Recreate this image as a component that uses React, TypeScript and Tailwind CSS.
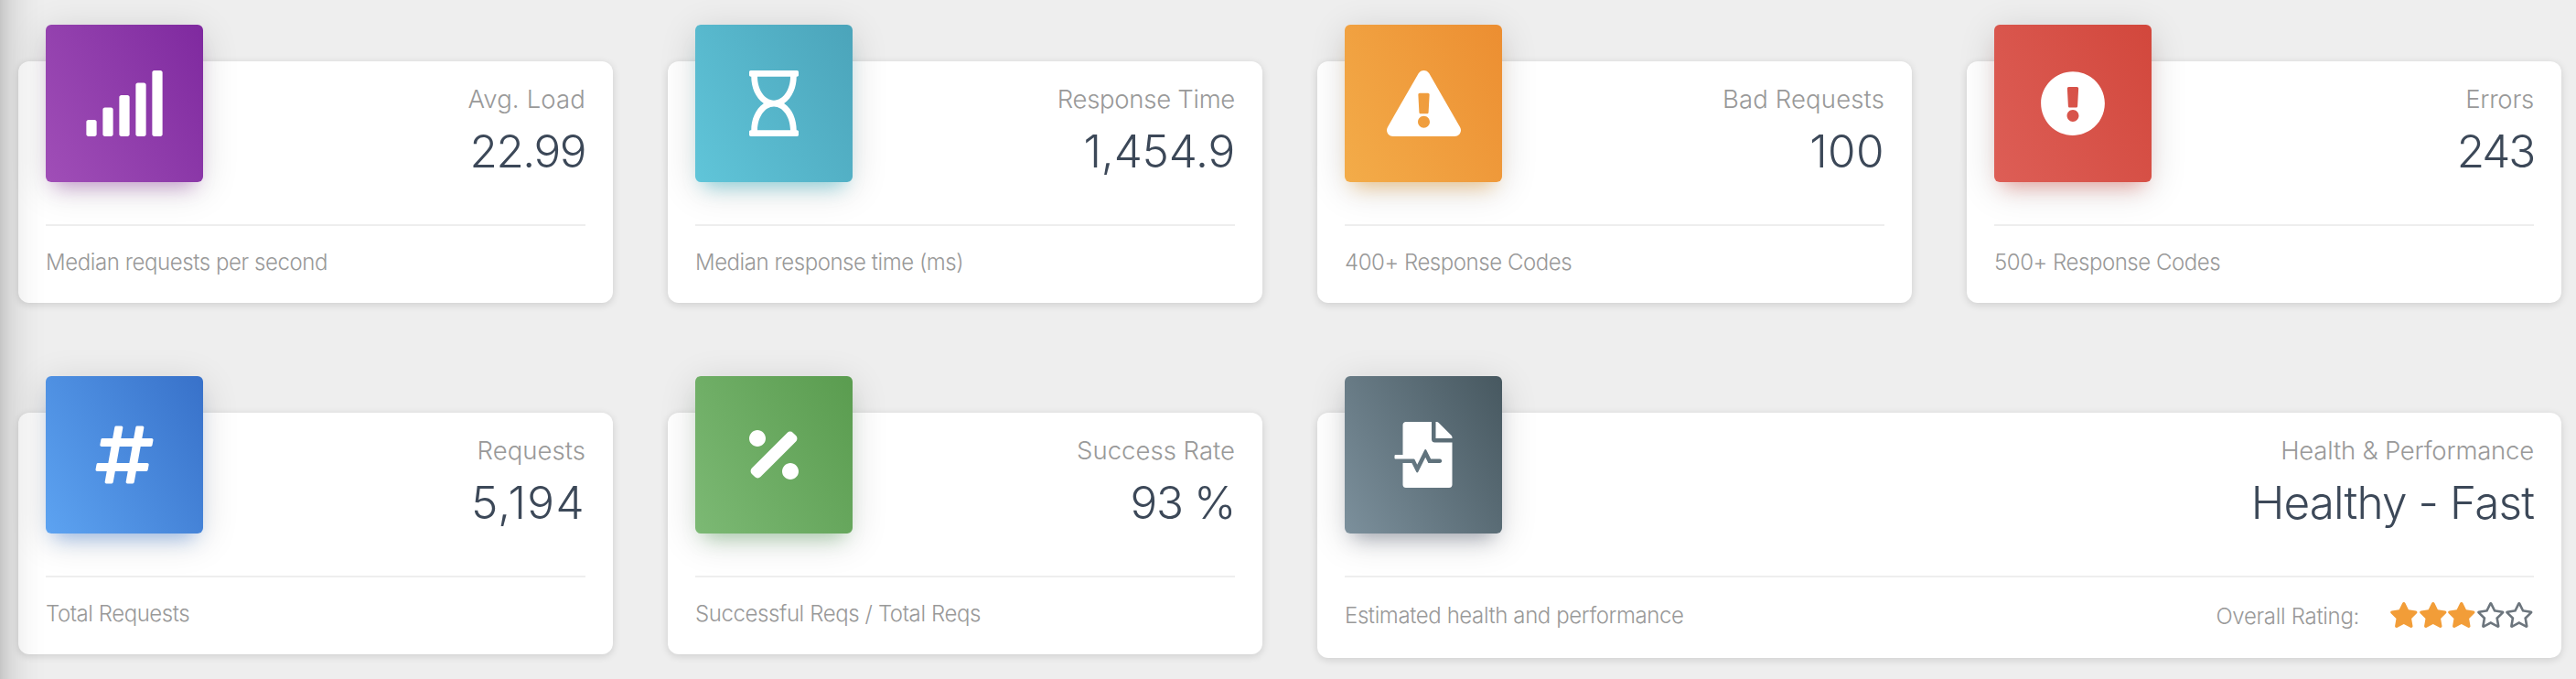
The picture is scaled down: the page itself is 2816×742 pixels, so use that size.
import type { ReactNode } from "react";
import type { IconType } from "react-icons";
import {
  FaExclamationCircle,
  FaExclamationTriangle,
  FaFileMedicalAlt,
  FaHashtag,
  FaPercentage,
  FaRegHourglass,
  FaRegStar,
  FaSignal,
  FaStar,
} from "react-icons/fa";

type Stat = {
  title: string;
  value: string;
  note: string;
  icon: IconType;
  iconWidth: string;
  tile: string;
  titleTracking: string;
  valueTracking: string;
  noteTracking: string;
};

const stats: Stat[] = [
  {
    title: "Avg. Load",
    value: "22.99",
    note: "Median requests per second",
    icon: FaSignal,
    iconWidth: "w-[90px]",
    tile: "from-[#a04eb7] to-[#7f299f] shadow-[0_8px_40px_rgba(0,0,0,0.14),0_14px_20px_-10px_rgba(156,39,176,0.4)]",
    titleTracking: "tracking-[0.15px]",
    valueTracking: "tracking-[-1.5px]",
    noteTracking: "tracking-[-0.42px]",
  },
  {
    title: "Response Time",
    value: "1,454.9",
    note: "Median response time (ms)",
    icon: FaRegHourglass,
    iconWidth: "w-[72px]",
    tile: "from-[#60c5d9] to-[#4ba4ba] shadow-[0_8px_40px_rgba(0,0,0,0.14),0_14px_20px_-10px_rgba(0,188,212,0.4)]",
    titleTracking: "tracking-[-0.28px]",
    valueTracking: "tracking-[-0.2px]",
    noteTracking: "tracking-[-0.45px]",
  },
  {
    title: "Bad Requests",
    value: "100",
    note: "400+ Response Codes",
    icon: FaExclamationTriangle,
    iconWidth: "w-[81px]",
    tile: "from-[#f3ac49] to-[#ec8e31] shadow-[0_8px_40px_rgba(0,0,0,0.14),0_14px_20px_-10px_rgba(255,152,0,0.4)]",
    titleTracking: "tracking-[0.15px]",
    valueTracking: "tracking-[0.4px]",
    noteTracking: "tracking-[-0.45px]",
  },
  {
    title: "Errors",
    value: "243",
    note: "500+ Response Codes",
    icon: FaExclamationCircle,
    iconWidth: "w-[72px]",
    tile: "from-[#dd5e56] to-[#d2473c] shadow-[0_8px_40px_rgba(0,0,0,0.14),0_14px_20px_-10px_rgba(244,67,54,0.4)]",
    titleTracking: "tracking-[-0.25px]",
    valueTracking: "tracking-[-2.2px]",
    noteTracking: "tracking-[-0.45px]",
  },
  {
    title: "Requests",
    value: "5,194",
    note: "Total Requests",
    icon: FaHashtag,
    iconWidth: "w-[72px]",
    tile: "from-[#5da3f1] to-[#3871c9] shadow-[0_8px_40px_rgba(0,0,0,0.14),0_14px_20px_-10px_rgba(33,120,243,0.4)]",
    titleTracking: "tracking-[0.05px]",
    valueTracking: "tracking-[1.4px]",
    noteTracking: "tracking-[-0.45px]",
  },
  {
    title: "Success Rate",
    value: "93 %",
    note: "Successful Reqs / Total Reqs",
    icon: FaPercentage,
    iconWidth: "w-[72px]",
    tile: "from-[#7cb974] to-[#5a9c4f] shadow-[0_8px_40px_rgba(0,0,0,0.14),0_14px_20px_-10px_rgba(76,175,80,0.4)]",
    titleTracking: "tracking-[0.02px]",
    valueTracking: "tracking-[-1.4px]",
    noteTracking: "tracking-[-0.4px]",
  },
  {
    title: "Health & Performance",
    value: "Healthy - Fast",
    note: "Estimated health and performance",
    icon: FaFileMedicalAlt,
    iconWidth: "w-[72px]",
    tile: "from-[#7c909c] to-[#475860] shadow-[0_8px_40px_rgba(0,0,0,0.14),0_14px_20px_-10px_rgba(60,72,100,0.4)]",
    titleTracking: "tracking-[-0.2px]",
    valueTracking: "tracking-[-0.9px]",
    noteTracking: "tracking-[-0.4px]",
  },
];

function Rating({ score }: { score: number }) {
  return (
    <div className="flex items-center">
      <span className="mt-0.5 mr-[33px] tracking-[-0.3px]">Overall Rating:</span>
      <div className="mb-0.5 flex">
        {[1, 2, 3, 4, 5].map((n) =>
          n <= score ? (
            <FaStar key={n} className="h-[28px] w-[31.6px] text-[#f29d38]" />
          ) : (
            <FaRegStar key={n} className="h-[28px] w-[31.6px] text-[#6c757d]" />
          ),
        )}
      </div>
    </div>
  );
}

function StatCard({ stat, wide, children }: { stat: Stat; wide?: boolean; children?: ReactNode }) {
  const Icon = stat.icon;
  return (
    <section
      className={`flex flex-col rounded-xl bg-white px-[30px] shadow-[0_2px_8px_rgba(0,0,0,0.14)] ${
        wide ? "col-span-2 h-[268px]" : "h-[264px]"
      }`}
    >
      <div className="flex h-[178px] shrink-0 justify-between">
        <div
          className={`-mt-10 flex size-[172px] items-center justify-center rounded-md bg-linear-60 text-white ${stat.tile}`}
        >
          <Icon className={`h-[72px] ${stat.iconWidth}`} />
        </div>
        <div className="text-right">
          <p className={`mt-[23px] h-[36px] text-[27.5px] leading-[36px] text-[#999999] ${stat.titleTracking}`}>
            {stat.title}
          </p>
          <p className={`mt-[9px] text-[49.5px] leading-[60px] text-[#3c4858] ${stat.valueTracking}`}>{stat.value}</p>
        </div>
      </div>
      <div
        className={`flex items-center justify-between border-t-2 border-[#eeeeee] text-[24px] leading-[36px] text-[#999999] ${
          wide ? "h-[85px]" : "h-[81px]"
        }`}
      >
        <span className={stat.noteTracking}>{stat.note}</span>
        {children}
      </div>
    </section>
  );
}

export default function App() {
  return (
    <main className="relative h-[742px] w-[2816px] overflow-hidden bg-[#eeeeee] pt-[67px] pl-5 font-['Inter',sans-serif] font-light whitespace-nowrap">
      <div className="grid w-[2780px] grid-cols-4 items-start gap-x-[60px] gap-y-[120px]">
        {stats.map((stat) => {
          const wide = stat.title === "Health & Performance";
          return (
            <StatCard key={stat.title} stat={stat} wide={wide}>
              {wide && <Rating score={3} />}
            </StatCard>
          );
        })}
      </div>
      <div className="pointer-events-none absolute -top-[200px] -left-[200px] h-[1200px] w-[200px] shadow-[0_20px_60px_-24px_rgba(0,0,0,0.42),0_8px_50px_rgba(0,0,0,0.12),0_16px_20px_-10px_rgba(0,0,0,0.2)]" />
    </main>
  );
}
